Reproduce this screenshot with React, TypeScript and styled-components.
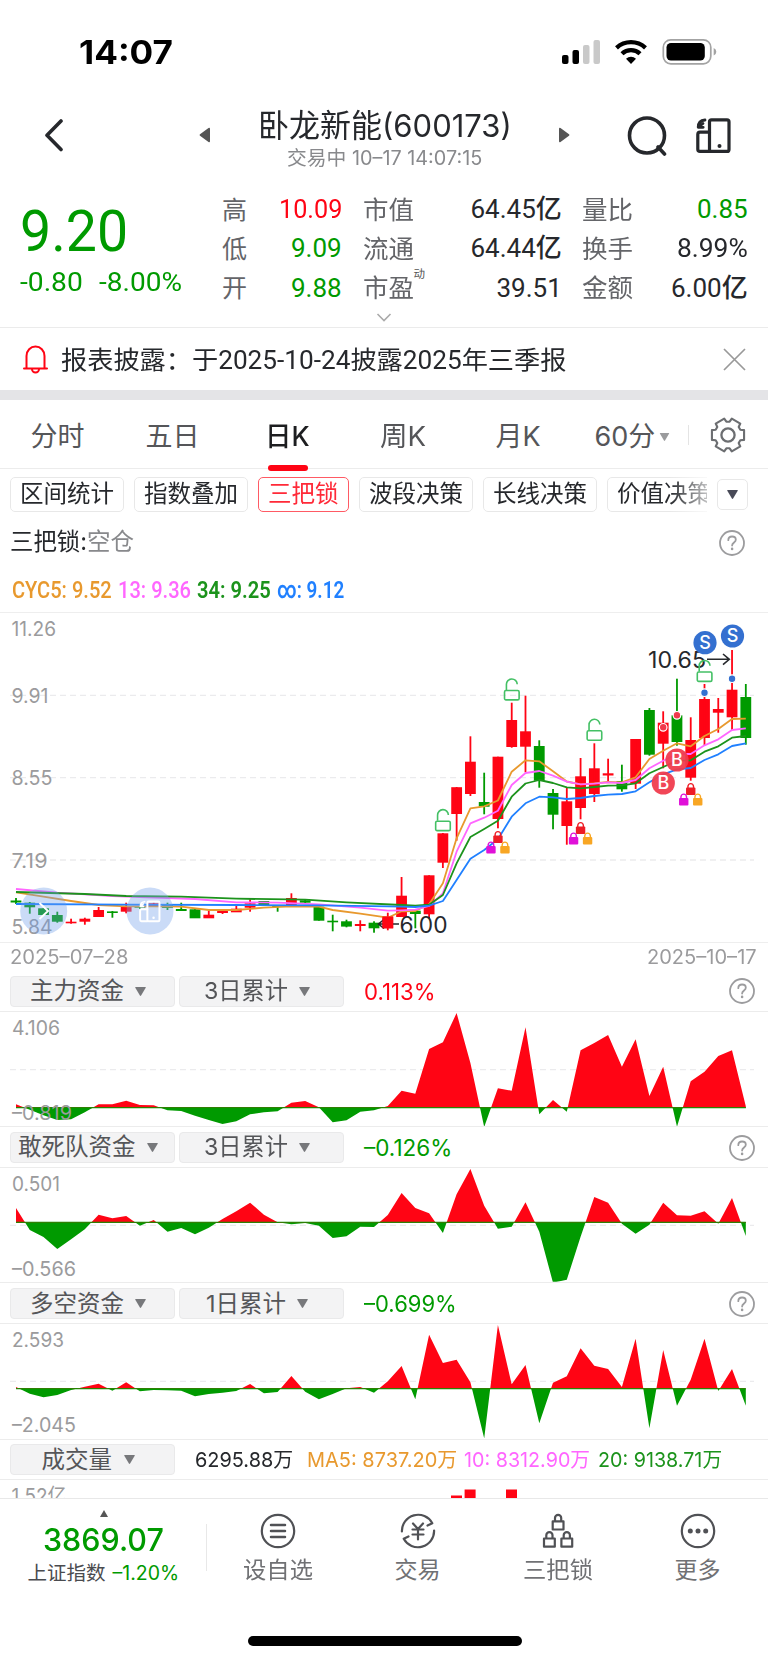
import React, { useLayoutEffect, useRef, useState } from 'react';
import styled, { createGlobalStyle } from 'styled-components';

const RED = '#ff0414';
const GREEN = '#009a00';
const ORANGE = '#e8992e';
const PINK = '#ff66ff';
const DGREEN = '#1c931c';
const BLUE = '#2080ff';
const INK = '#26282c';

const sans = `Inter, "Noto Sans CJK SC", sans-serif`;
const din = `Roboto, "Noto Sans CJK SC", sans-serif`;

const Global = createGlobalStyle`
  *{box-sizing:border-box}
  body{margin:0;background:#fff;font-family:${sans};color:${INK};}
`;

/* ---------- text fitted to a set width ---------- */
const FitBox = styled.span<{ $w: number }>`
  display: inline-block;
  flex: none;
  width: ${(p) => p.$w}px;
  white-space: nowrap;
  text-align: left;
`;
const FitInner = styled.span`
  display: inline-block;
  transform-origin: 0 50%;
  white-space: pre;
`;
function Fit({ w, children }: { w: number; children: React.ReactNode }) {
  const ref = useRef<HTMLSpanElement>(null);
  const [scale, setScale] = useState(1);
  useLayoutEffect(() => {
    if (ref.current) setScale(w / ref.current.offsetWidth);
  }, [w]);
  return (
    <FitBox $w={w}>
      <FitInner ref={ref} style={{ transform: `scaleX(${scale})` }}>{children}</FitInner>
    </FitBox>
  );
}

const Text = styled.span<{ $s: number; $c?: string; $b?: number; $din?: boolean }>`
  display: flex;
  flex: none;
  font-size: ${(p) => p.$s}px;
  line-height: 1.2;
  color: ${(p) => p.$c || INK};
  font-weight: ${(p) => p.$b || 400};
  font-family: ${(p) => (p.$din ? din : sans)};
`;

const Page = styled.div`
  width: 768px;
  height: 1663px;
  overflow: hidden;
  background: #fff;
  display: flex;
  flex-direction: column;
`;

/* ---------- status bar and header ---------- */
const StatusBar = styled.div`
  height: 103px;
  flex: none;
  display: flex;
  align-items: center;
  justify-content: space-between;
  padding: 1px 50px 0 79px;
`;
const Header = styled.div`
  height: 87px;
  flex: none;
  display: grid;
  grid-template-columns: 199px 371px 198px;
`;
const BackCell = styled.div`
  padding: 15px 0 0 42px;
`;
const TitleCell = styled.div`
  display: flex;
  justify-content: space-between;
  > svg { margin-top: 24px; }
`;
const TitleText = styled.div`
  display: flex;
  flex-direction: column;
  align-items: center;
  padding-top: 4px;
  gap: 2.5px;
`;
const ToolCell = styled.div`
  display: flex;
  gap: 29px;
  padding: 12px 0 0 54.5px;
`;

/* ---------- quote ---------- */
const Quote = styled.div`
  height: 138px;
  flex: none;
  display: grid;
  grid-template-columns: 222px 526px;
  grid-template-rows: 118px 19px;
  border-bottom: 1px solid #ebebeb;
`;
const PriceBlock = styled.div`
  padding: 7px 0 0 20px;
`;
const ChangeRow = styled.div`
  display: flex;
  gap: 16px;
`;
const Stats = styled.div`
  display: grid;
  grid-template-columns: 120px 199px 166px;
  grid-template-rows: repeat(3, 39.3px);
  column-gap: 20.5px;
`;
const Stat = styled.div`
  display: flex;
  justify-content: space-between;
  align-items: center;
`;
const StatLabel = styled.div`
  position: relative;
`;
const Sup = styled.span`
  position: absolute;
  left: 100%;
  top: -8px;
  font-size: 11.5px;
  color: #555;
`;
const Expand = styled.div`
  grid-column: 1 / 3;
  display: flex;
  padding: 5px 0 0 376px;
`;
const Notice = styled.div`
  height: 62px;
  flex: none;
  display: flex;
  align-items: center;
  padding: 0 22px 0 23px;
  > svg:last-child { margin-left: auto; }
  > span { margin: 3px 0 0 13px; }
`;
const Band = styled.div`
  height: 10px;
  flex: none;
  background: #e4e4e7;
`;

/* ---------- tabs ---------- */
const Tabs = styled.div`
  height: 69px;
  flex: none;
  display: grid;
  grid-template-columns: 115px 115px 115px 115px 116px 112px 80px;
  border-bottom: 1px solid #ececec;
`;
const Tab = styled.div`
  position: relative;
  display: flex;
  align-items: center;
  justify-content: center;
  gap: 3px;
  padding-top: 6px;
`;
const Underline = styled.span`
  position: absolute;
  bottom: -2.5px;
  width: 40px;
  height: 6px;
  border-radius: 3px;
  background: ${RED};
`;
const GearCell = styled.div`
  display: flex;
  align-items: center;
  gap: 21px;
  padding-top: 2px;
  &::before { content: ''; width: 1px; height: 20px; background: #e4e4e4; }
`;
const Chips = styled.div`
  height: 51px;
  flex: none;
  display: flex;
  align-items: center;
  padding: 0 20px 0 10px;
`;
const ChipScroll = styled.div`
  width: 697px;
  display: flex;
  gap: 10px;
  overflow: hidden;
  -webkit-mask-image: linear-gradient(90deg, #000 660px, transparent 712px);
  mask-image: linear-gradient(90deg, #000 660px, transparent 712px);
`;
const Chip = styled.div<{ $on?: boolean }>`
  flex: none;
  height: 35px;
  padding: 0 9px;
  display: flex;
  align-items: center;
  border: 1px solid ${(p) => (p.$on ? '#ff5a64' : '#e8e8e8')};
  border-radius: 5px;
`;
const MoreBox = styled.div`
  width: 31px;
  height: 31px;
  margin-left: 10px;
  border: 1px solid #e8e8e8;
  border-radius: 5px;
  display: flex;
  align-items: center;
  justify-content: center;
`;
const LockLine = styled.div`
  height: 43px;
  flex: none;
  display: flex;
  align-items: center;
  padding: 2px 23px 0 10px;
  > svg { margin-left: auto; }
`;
const CycLine = styled.div`
  height: 50px;
  flex: none;
  display: flex;
  align-items: center;
  gap: 6px;
  padding: 4px 0 0 12px;
  border-bottom: 1px solid #eeeeee;
`;
const Dates = styled.div`
  height: 29px;
  flex: none;
  display: flex;
  justify-content: space-between;
  align-items: center;
  padding: 1px 11px 0 10px;
  border-top: 1px solid #eeeeee;
`;

/* ---------- fund panels ---------- */
const FundHead = styled.div`
  height: 40.8px;
  flex: none;
  display: flex;
  align-items: center;
  gap: 4px;
  padding: 1px 13px 0 10px;
  border-bottom: 1px solid #ececec;
  > svg { margin-left: auto; }
`;
const FundBody = styled.div`
  height: 115.4px;
  flex: none;
  border-bottom: 1px solid #ececec;
`;
const Picker = styled.div`
  width: 165px;
  height: 31px;
  flex: none;
  background: #f3f3f4;
  border: 1px solid #e9e9ea;
  border-radius: 4px;
  display: flex;
  align-items: center;
  justify-content: center;
  gap: 11px;
  padding-right: 9px;
`;
const FundValue = styled.div`
  margin-left: 16px;
`;
const MaRow = styled.div`
  display: flex;
  margin-left: 15.5px;
  > :nth-child(2) { margin-left: 14.5px; }
  > :nth-child(3) { margin-left: 7px; }
  > :nth-child(4) { margin-left: 8px; }
`;
const VolBody = styled.div`
  height: 18px;
  flex: none;
  overflow: hidden;
`;

/* ---------- bottom bar ---------- */
const Bottom = styled.div`
  height: 120px;
  flex: none;
  display: grid;
  grid-template-columns: 207px 141px 139px 141px 139px;
  border-top: 1px solid #e8e8e8;
`;
const IndexCell = styled.div`
  position: relative;
  display: flex;
  flex-direction: column;
  align-items: center;
  padding-top: 11px;
  gap: 3.5px;
  &::after { content: ''; position: absolute; right: 0; top: 25px; width: 1px; height: 47px; background: #e8e8e8; }
`;
const IndexRow = styled.div`
  display: flex;
  gap: 7px;
`;
const Action = styled.div`
  display: flex;
  flex-direction: column;
  align-items: center;
  padding-top: 14px;
  gap: 8px;
`;
const Home = styled.div`
  width: 274px;
  height: 10px;
  margin: 17.5px 0 0 247.5px;
  border-radius: 5px;
  background: #000;
`;

/* ---------- small drawings ---------- */
const Caret = ({ w = 11, h = 9, c = '#77787b' }: { w?: number; h?: number; c?: string }) => (
  <svg width={w} height={h} viewBox="0 0 11 9"><path d="M0.7 0h9.6q.7 0 .4.7L6.1 8.5q-.6.8-1.2 0L.3.7Q0 0 .7 0z" fill={c} /></svg>
);
const Help = () => (
  <svg width="26" height="26" viewBox="0 0 26 26" fill="none" stroke="#9c9c9e" strokeWidth="1.8">
    <circle cx="13" cy="13" r="12" />
    <path d="M9.3 10.2c0-2.2 1.6-3.7 3.8-3.7s3.7 1.4 3.7 3.3c0 2.6-3.7 2.9-3.7 5.8" strokeLinecap="round" />
    <circle cx="13.1" cy="18.9" r="1.3" fill="#9c9c9e" stroke="none" />
  </svg>
);
const gearPath = () => {
  const pts: string[] = [];
  for (let k = 0; k < 6; k++) {
    for (const [a, r] of [[-23, 13.4], [-17, 16.8], [17, 16.8], [23, 13.4]]) {
      const t = ((k * 60 + a) * Math.PI) / 180;
      pts.push(`${(18 + r * Math.cos(t)).toFixed(2)} ${(18 + r * Math.sin(t)).toFixed(2)}`);
    }
  }
  return `M${pts.join('L')}Z`;
};
const Gear = () => (
  <svg width="36" height="36" fill="none" stroke="#6c6e71" strokeWidth="2.1" strokeLinejoin="round">
    <path d={gearPath()} />
    <circle cx="18" cy="18" r="6.6" strokeWidth="2.3" />
  </svg>
);

/* ---------- candle chart ---------- */
const STEP = 13.77;
const cx = (i: number) => 16 + i * STEP;
// [up, body top, body bottom, high, low]
const candles: [number, number, number, number, number][] = [
  [0, 287.5, 289.5, 285, 291], [0, 289.7, 294.3, 289, 300.7], [0, 295.3, 302, 295, 302], [0, 302, 308.7, 298.7, 309.7],
  [1, 308.7, 310.3, 305.7, 310.7], [1, 305.7, 308.7, 304.7, 311.7], [1, 297, 304, 294, 304], [0, 298.4, 300, 298, 304.7],
  [1, 293.7, 298.7, 289.7, 300.3], [0, 293, 294.7, 292, 296], [1, 290.3, 294, 289.7, 294], [0, 292, 295, 289.7, 297],
  [0, 296, 298, 289.7, 298], [0, 296.3, 305.3, 296, 305], [1, 301.7, 305.3, 297.7, 305], [1, 298, 300, 297.7, 301],
  [1, 295.7, 299.3, 293, 299], [1, 290.3, 294.7, 286.3, 298.7], [0, 288, 292.3, 288, 292], [0, 292.3, 294, 292, 298.7],
  [1, 285, 292, 280.3, 294], [0, 287.3, 289.7, 287, 290], [0, 293.7, 307.7, 293.7, 307.7], [0, 307.7, 309.3, 301.7, 318.3],
  [0, 308.3, 313.6, 306.7, 314.3], [1, 311, 313, 307.3, 318.3], [0, 309.7, 315.3, 308.3, 319.7], [1, 303.5, 315.3, 299.7, 317.3],
  [1, 282.7, 304, 264, 304], [0, 297.7, 301, 297, 315.3], [1, 262.3, 301.3, 262.3, 305.7], [1, 220.3, 249.7, 220, 255],
  [1, 174.2, 201, 174, 227.7], [1, 148.7, 181, 123.3, 183], [0, 189, 193.7, 159.7, 201.3], [1, 143.7, 206, 143.7, 215.3],
  [1, 107, 134, 89.7, 134.7], [1, 118.3, 133.7, 82.7, 159.3], [0, 133, 167.7, 127.3, 174.7], [0, 180, 201.7, 176, 216.3],
  [1, 188.3, 213, 174.7, 231.7], [1, 163.3, 195, 145, 206.3], [1, 155.3, 181, 130.3, 189], [1, 160.3, 162.5, 145.7, 168.7],
  [0, 168, 176.3, 151.7, 178.7], [1, 126, 170.7, 126, 176], [0, 97, 141.7, 95, 142.7], [1, 109.7, 130.7, 98.3, 155.3],
  [0, 102.3, 129, 65.7, 132.7], [1, 127, 164.7, 104.3, 167.7], [1, 86, 125, 71, 132], [1, 96, 99.7, 85, 119.7],
  [1, 76.7, 104.3, 37, 117], [0, 84, 125, 71, 131.7],
];
const maOrange: [number, number][] = [[0, 279.3], [2, 283.7], [4, 288], [6, 292], [8, 293.3], [10, 293.3], [12, 293.7], [14, 297], [16, 297], [18, 294.7], [20, 293.3], [22, 293.7], [23, 297], [25, 300.7], [27, 304.7], [28, 298.3], [29, 298], [30, 291.3], [31, 270.3], [32, 225.3], [33, 195.3], [34, 193.3], [35, 187.5], [36, 158.7], [37, 147.3], [38, 148.3], [39, 158.3], [40, 168.5], [41, 171.3], [42, 170.3], [43, 169], [44, 169.3], [45, 164.3], [46, 146], [47, 137.7], [48, 130.3], [49, 133.3], [50, 123], [51, 116], [52, 106], [53, 105.7]];
const maPink: [number, number][] = [[0, 276], [3, 279.7], [7, 283], [10, 284.7], [13, 286], [16, 289.3], [19, 289.7], [22, 291.3], [25, 294.7], [27, 297.7], [28, 297.3], [29, 296.7], [30, 293], [31, 280.3], [32, 238.7], [33, 210.3], [34, 204.7], [35, 197.7], [36, 172], [37, 160], [38, 158], [39, 162.7], [40, 168.7], [41, 171.3], [42, 170.7], [43, 169.3], [44, 170], [45, 167], [46, 155.3], [47, 147.7], [48, 141], [49, 141], [50, 132.3], [51, 126.3], [52, 117], [53, 115.3]];
const maGreen: [number, number][] = [[0, 279], [5, 281], [8, 283], [12, 283.7], [16, 285.7], [21, 286.7], [24, 289.3], [28, 292], [29, 292.7], [30, 291.7], [31, 282], [32, 250.3], [33, 224], [34, 216], [35, 207.7], [36, 183.7], [37, 170.5], [38, 167], [39, 170], [40, 174.3], [41, 175.3], [42, 174], [43, 172.7], [44, 172.3], [45, 170.3], [46, 160.3], [47, 154], [48, 147.7], [49, 147.3], [50, 138.7], [51, 133.3], [52, 124.7], [53, 123]];
const maBlue: [number, number][] = [[0, 291], [8, 291.7], [16, 292], [22, 292.3], [27, 293.3], [28, 293.7], [29, 294], [30, 292.7], [31, 288], [32, 267], [33, 245.7], [34, 237], [35, 226.3], [36, 203.7], [37, 190.3], [38, 183.7], [39, 184.3], [40, 186], [41, 185], [42, 183], [43, 181.7], [44, 181], [45, 178.3], [46, 169.3], [47, 161.3], [48, 156.3], [49, 155], [50, 147], [51, 141.3], [52, 133], [53, 130.3]];
const line = (p: [number, number][]) => p.map(([i, y]) => `${cx(i).toFixed(1)},${y}`).join(' ');

const ChartSvg = styled.svg`
  display: block;
  flex: none;
  font-family: ${sans};
`;

const OpenLock = ({ i, y }: { i: number; y: number }) => (
  <g transform={`translate(${cx(i) - 7.2} ${y})`} fill="none" stroke="#44c065" strokeWidth="1.6">
    <rect x="0" y="0.5" width="14.6" height="9.4" rx="1.4" />
    <path d="M1.9 0V-5.5a5.4 5.4 0 0 1 10.8-0.3" />
  </g>
);
const MiniLock = ({ x, y, c }: { x: number; y: number; c: string }) => (
  <g transform={`translate(${x} ${y})`}>
    <path d="M-2.8 5V3.4a2.8 2.8 0 0 1 5.6 0V5" fill="none" stroke={c} strokeWidth="1.4" />
    <rect x="-4.7" y="4.6" width="9.4" height="7.4" rx="1" fill={c} />
  </g>
);
const TripleLock = ({ i, y }: { i: number; y: number }) => (
  <g>
    <MiniLock x={cx(i)} y={y} c="#ee1c25" />
    <MiniLock x={cx(i) - 7} y={y + 10.5} c="#e010d8" />
    <MiniLock x={cx(i) + 7} y={y + 10.5} c="#f8a623" />
  </g>
);
const Badge = ({ x, y, t, c }: { x: number; y: number; t: string; c: string }) => (
  <g>
    <circle cx={x} cy={y} r="11.6" fill={c} />
    <text x={x} y={y + 6.4} fontSize="18" fontWeight="500" textAnchor="middle" fill="#fff">{t}</text>
  </g>
);
const Flip = ({ x, y, k, c }: { x: number; y: number; k: number; c: string }) => (
  <g transform={`translate(${x} ${y}) scale(${k})`} fill="none" stroke={c} strokeWidth="3.2" strokeLinejoin="round" strokeLinecap="round">
    <rect x="13.5" y="1.8" width="19.5" height="31.6" rx="2" />
    <path d="M13.5 14.2H4q-2.2 0-2.2 2.2v14.8q0 2.2 2.2 2.2h9.5" />
    <path d="M9 2C4.5 2.4 2.2 4.8 2.2 9.3M2.2 9.3h5M7 5.5L2.5 9" strokeWidth="2.8" />
    <circle cx="23.5" cy="28" r="2" fill={c} stroke="none" />
  </g>
);

const KChart = () => (
  <ChartSvg width="768" height="329" viewBox="0 0 768 329">
    {[82.3, 164.7, 247].map((y) => <path key={y} d={`M10 ${y}H754`} stroke="#ebebed" strokeWidth="1.3" strokeDasharray="6 4" />)}
    {candles.map(([up, t, b, h, l], i) => (
      <g key={i} fill={up ? RED : GREEN}>
        <rect x={cx(i) - 5.4} y={t} width="10.8" height={b - t} />
        <rect x={cx(i) - 0.9} y={h} width="1.8" height={l - h} />
      </g>
    ))}
    <g fill="none" strokeWidth="1.8" strokeLinejoin="round">
      <polyline points={line(maOrange)} stroke={ORANGE} />
      <polyline points={line(maPink)} stroke={PINK} />
      <polyline points={line(maGreen)} stroke={DGREEN} />
      <polyline points={line(maBlue)} stroke={BLUE} />
    </g>
    <g fontSize="20" fill="#9b9b9d">
      <text x="11.5" y="22.7" textLength="44.5" lengthAdjust="spacingAndGlyphs">11.26</text>
      <text x="11.5" y="90" textLength="37" lengthAdjust="spacingAndGlyphs">9.91</text>
      <text x="11.5" y="172.3" textLength="41" lengthAdjust="spacingAndGlyphs">8.55</text>
      <text x="11.5" y="254.7" textLength="36" lengthAdjust="spacingAndGlyphs">7.19</text>
      <text x="11.5" y="321.3" textLength="41" lengthAdjust="spacingAndGlyphs">5.84</text>
    </g>
    <g fill="none" stroke={INK} strokeWidth="1.6">
      <path d="M378.5 311H399M384 306.5L378.5 311l5.5 4.500" />
      <path d="M707 46.3H729M723 41l6.3 5.3L723 51.6" />
    </g>
    <rect x={cx(27) - 5.4} y="303.5" width="10.8" height="11.8" fill={RED} />
    <g fontSize="22.5" fill={INK}>
      <text x="399.5" y="319.6" textLength="48" lengthAdjust="spacingAndGlyphs">6.00</text>
      <text x="648" y="54.5" textLength="58" lengthAdjust="spacingAndGlyphs">10.65</text>
    </g>
    <OpenLock i={31} y={207.7} />
    <OpenLock i={36} y={77} />
    <OpenLock i={42} y={117.3} />
    <OpenLock i={50} y={58.5} />
    <TripleLock i={35} y={218} />
    <TripleLock i={41} y={209} />
    <TripleLock i={49} y={170} />
    <g stroke="#fff" strokeWidth="1.2">
      <circle cx={cx(50)} cy="79.7" r="3.8" fill="#3470d0" />
      <circle cx={cx(52)} cy="65.7" r="3.8" fill="#3470d0" />
      <circle cx={cx(47)} cy="114.3" r="3.8" fill="#f03a4c" />
      <circle cx={cx(48)} cy="102.3" r="3.8" fill="#f03a4c" />
    </g>
    <Badge x={705} y={29.7} t="S" c="#3470d0" />
    <Badge x={732.5} y={23} t="S" c="#3470d0" />
    <Badge x={663.3} y={170} t="B" c="#f03a4cf0" />
    <Badge x={677} y={147} t="B" c="#f03a4cf0" />
    <circle cx="43.7" cy="298" r="23.5" fill="#6c9ae8" fillOpacity="0.36" />
    <circle cx="150" cy="298" r="23.5" fill="#7ba6ea" fillOpacity="0.4" />
    <path d="M39.5 290L48 298L39.5 306" fill="none" stroke="#fff" strokeWidth="1.9" />
    <Flip x={139} y={287.5} k={0.62} c="#fff" />
  </ChartSvg>
);

/* ---------- fund flow charts ---------- */
interface Fund { name: string; span: string; value: string; vw: number; up: boolean; hi: string; hiW: number; lo: string; loW: number; zero: number; grid: number; tw: number; sw: number; d: number[] }
// each series holds depths below the top edge, in thirds of a pixel
const funds: Fund[] = [
  {
    name: '主力资金', tw: 94, span: '3日累计', sw: 84, value: '0.113%', vw: 71, up: true, hi: '4.106', hiW: 48, lo: '–0.819', loW: 60, zero: 287, grid: 173,
    d: [277, 293, 310, 324, 322, 301, 277, 277, 266, 279, 280, 295, 297, 311, 324, 336, 328, 307, 301, 298, 272, 267, 286, 331, 325, 299, 295, 282, 236, 245, 111, 91, 3, 153, 345, 229, 236, 46, 307, 264, 299, 115, 93, 69, 164, 82, 252, 164, 344, 208, 179, 132, 115, 283],
  },
  {
    name: '敢死队资金', tw: 118, span: '3日累计', sw: 84, value: '–0.126%', vw: 88, up: false, hi: '0.501', hiW: 48, lo: '–0.566', loW: 64, zero: 163, grid: 172,
    d: [120, 186, 207, 243, 214, 184, 140, 151, 144, 173, 156, 191, 180, 199, 179, 153, 130, 104, 140, 163, 169, 165, 173, 210, 205, 176, 177, 141, 75, 120, 136, 195, 79, 3, 113, 182, 176, 103, 191, 344, 335, 206, 87, 104, 167, 197, 170, 104, 142, 143, 130, 167, 90, 204],
  },
  {
    name: '多空资金', tw: 94, span: '1日累计', sw: 80, value: '–0.699%', vw: 93, up: false, hi: '2.593', hiW: 52, lo: '–2.045', loW: 64, zero: 194, grid: 172,
    d: [189, 209, 220, 213, 198, 188, 179, 200, 175, 202, 198, 199, 200, 217, 210, 206, 201, 180, 208, 204, 156, 203, 226, 210, 193, 189, 206, 172, 126, 226, 32, 117, 107, 175, 343, 3, 181, 123, 298, 176, 157, 73, 125, 135, 189, 44, 313, 78, 245, 167, 44, 201, 135, 245],
  },
];

const FundChart = ({ f, id }: { f: Fund; id: string }) => {
  const z = f.zero / 3;
  const pts = f.d.map((v, i) => `${cx(i).toFixed(1)} ${(v / 3).toFixed(1)}`).join('L');
  const d = `M16 ${z}L${pts}L${cx(53)} ${z}Z`;
  return (
    <ChartSvg width="768" height="114" viewBox="0 0 768 114" fontSize="20">
      <clipPath id={`${id}u`}><rect width="768" height={z + 0.6} /></clipPath>
      <clipPath id={`${id}d`}><rect y={z - 0.6} width="768" height="60" /></clipPath>
      <path d={`M10 ${f.grid / 3}H754`} stroke="#ebebed" strokeWidth="1.3" strokeDasharray="6 4" />
      <path d={`M16 ${z}H${cx(53)}`} stroke={GREEN} strokeWidth="1.2" />
      <path d={d} fill={RED} clipPath={`url(#${id}u)`} />
      <path d={d} fill={GREEN} clipPath={`url(#${id}d)`} />
      <g fill="#9b9b9d">
        <text x="12" y="22.8" textLength={f.hiW} lengthAdjust="spacingAndGlyphs">{f.hi}</text>
        <text x="12" y="108" textLength={f.loW} lengthAdjust="spacingAndGlyphs">{f.lo}</text>
      </g>
    </ChartSvg>
  );
};

const stats: { l: string; lw: number; v: string; w: number; c?: string; sup?: string }[] = [
  { l: '高', lw: 25, v: '10.09', w: 63, c: RED }, { l: '市值', lw: 51, v: '64.45亿', w: 91 }, { l: '量比', lw: 51, v: '0.85', w: 51, c: GREEN },
  { l: '低', lw: 25, v: '9.09', w: 51, c: GREEN }, { l: '流通', lw: 51, v: '64.44亿', w: 91 }, { l: '换手', lw: 51, v: '8.99%', w: 71 },
  { l: '开', lw: 25, v: '9.88', w: 51, c: GREEN }, { l: '市盈', lw: 51, v: '39.51', w: 65, sup: '动' }, { l: '金额', lw: 51, v: '6.00亿', w: 77 },
];
const chips: [string, number][] = [['区间统计', 94], ['指数叠加', 94], ['三把锁', 71], ['波段决策', 94], ['长线决策', 94], ['价值决策', 94]];

export default function App() {
  return (
    <>
      <Global />
      <Page>
        <StatusBar>
          <Text $s={32.5} $b={700} $c="#000"><Fit w={94}>14:07</Fit></Text>
          <svg width="156" height="28" viewBox="0 0 156 28">
            <rect x="0" y="17" width="6.5" height="9" rx="2" /><rect x="10.5" y="12" width="6.5" height="14" rx="2" />
            <rect x="21" y="7" width="6.5" height="19" rx="2" fill="#c9c9c9" /><rect x="31.5" y="2" width="6.5" height="24" rx="2" fill="#c9c9c9" />
            <g fill="none" stroke="#000" strokeWidth="4.3">
              <path d="M54.5 9.8a21.5 21.5 0 0 1 29 0" /><path d="M60 15.8a13 13 0 0 1 18 0" />
            </g>
            <path d="M64 20.7a7.6 7.6 0 0 1 10 0L69 26z" />
            <rect x="101.3" y="1.8" width="47.5" height="24" rx="7.5" fill="none" stroke="#a3a3a3" strokeWidth="1.7" />
            <rect x="104.5" y="5" width="38.3" height="17.6" rx="4.5" />
            <path d="M151.7 10q2.6 1 2.6 3.8t-2.6 3.8z" fill="#a3a3a3" />
          </svg>
        </StatusBar>
        <Header>
          <BackCell>
            <svg width="24" height="34" fill="none" stroke={INK} strokeWidth="3.6" strokeLinecap="round" strokeLinejoin="round"><path d="M19 3L5 17.3L19 31.5" /></svg>
          </BackCell>
          <TitleCell>
            <svg width="12" height="16"><path d="M1 7.2L9.500 1q1.5-.8 1.500 1v12q0 1.8-1.500 1L1 8.800q-1-.8 0-1.600z" fill="#555" /></svg>
            <TitleText>
              <Text $s={31.5}><Fit w={254}>卧龙新能(600173)</Fit></Text>
              <Text $s={19.5} $c="#88898c"><Fit w={195}>交易中 10–17 14:07:15</Fit></Text>
            </TitleText>
            <svg width="12" height="16"><path d="M11 7.2L2.500 1Q1 .2 1 2v12q0 1.8 1.500 1L11 8.800q1-.8 0-1.600z" fill="#555" /></svg>
          </TitleCell>
          <ToolCell>
            <svg width="42" height="42" fill="none" stroke={INK} strokeWidth="3.6"><circle cx="22" cy="20.5" r="17.5" /><path d="M33 32l6.5 7" strokeLinecap="round" /></svg>
            <svg width="36" height="40"><Flip x={0} y={3} k={1} c={INK} /></svg>
          </ToolCell>
        </Header>
        <Quote>
          <PriceBlock>
            <Text $s={58} $c={GREEN} $b={450} $din><Fit w={108}>9.20</Fit></Text>
            <ChangeRow>
              <Text $s={26} $c={GREEN} $din><Fit w={63}>-0.80</Fit></Text>
              <Text $s={26} $c={GREEN} $din><Fit w={83}>-8.00%</Fit></Text>
            </ChangeRow>
          </PriceBlock>
          <Stats>
            {stats.map((s) => (
              <Stat key={s.l}>
                <StatLabel>
                  <Text $s={25} $c="#646569"><Fit w={s.lw}>{s.l}</Fit></Text>
                  {s.sup && <Sup>{s.sup}</Sup>}
                </StatLabel>
                <Text $s={26} $b={450} $c={s.c} $din><Fit w={s.w}>{s.v}</Fit></Text>
              </Stat>
            ))}
          </Stats>
          <Expand><svg width="16" height="9" fill="none" stroke="#aaa" strokeWidth="1.6"><path d="M1.5 1L8 7.5L14.5 1" /></svg></Expand>
        </Quote>
        <Notice>
          <svg width="25" height="29" viewBox="0 0 25 29" fill="none" stroke={RED} strokeWidth="2">
            <path d="M1 23.5H24M3.5 23.5V11a9 9.5 0 0 1 18 0v12.5" strokeLinecap="round" />
            <path d="M9 24a3.5 3.5 0 0 0 7 0" />
          </svg>
          <Text $s={25} $din><Fit w={505}>报表披露：于2025-10-24披露2025年三季报</Fit></Text>
          <svg width="23" height="23" stroke="#999" strokeWidth="1.7"><path d="M1 1L22 22M22 1L1 22" /></svg>
        </Notice>
        <Band />
        <Tabs>
          <Tab><Text $s={27} $c="#555659"><Fit w={54}>分时</Fit></Text></Tab>
          <Tab><Text $s={27} $c="#555659"><Fit w={54}>五日</Fit></Text></Tab>
          <Tab><Text $s={27} $b={500} $c="#1d1e20"><Fit w={45}>日K</Fit></Text><Underline /></Tab>
          <Tab><Text $s={27} $c="#555659"><Fit w={46}>周K</Fit></Text></Tab>
          <Tab><Text $s={27} $c="#555659"><Fit w={45}>月K</Fit></Text></Tab>
          <Tab><Text $s={27} $c="#555659"><Fit w={61}>60分</Fit></Text><Caret w={11} h={8} c="#9a9b9d" /></Tab>
          <GearCell><Gear /></GearCell>
        </Tabs>
        <Chips>
          <ChipScroll>
            {chips.map(([t, w], i) => (
              <Chip key={t} $on={i === 2}><Text $s={23.5} $c={i === 2 ? '#ff2a38' : INK}><Fit w={w}>{t}</Fit></Text></Chip>
            ))}
          </ChipScroll>
          <MoreBox><Caret w={11} h={9} c="#484a57" /></MoreBox>
        </Chips>
        <LockLine>
          <Text $s={24}><Fit w={77}>三把锁:</Fit></Text>
          <Text $s={24} $c="#88898c"><Fit w={47}>空仓</Fit></Text>
          <Help />
        </LockLine>
        <CycLine>
          <Text $s={24.5} $b={550} $din $c={ORANGE}><Fit w={100}>CYC5: 9.52</Fit></Text>
          <Text $s={24.5} $b={500} $din $c={PINK}><Fit w={73}>13: 9.36</Fit></Text>
          <Text $s={24.5} $b={600} $din $c={DGREEN}><Fit w={74}>34: 9.25</Fit></Text>
          <Text $s={24.5} $b={600} $din $c={BLUE}><Fit w={67}>∞: 9.12</Fit></Text>
        </CycLine>
        <KChart />
        <Dates>
          <Text $s={19.5} $c="#9b9b9d"><Fit w={118}>2025–07–28</Fit></Text>
          <Text $s={19.5} $c="#9b9b9d"><Fit w={110}>2025–10–17</Fit></Text>
        </Dates>
        {funds.map((f, i) => (
          <React.Fragment key={f.name}>
            <FundHead>
              <Picker><Text $s={23.5} $c="#555659"><Fit w={f.tw}>{f.name}</Fit></Text><Caret /></Picker>
              <Picker><Text $s={23.5} $c="#555659"><Fit w={f.sw}>{f.span}</Fit></Text><Caret /></Picker>
              <FundValue><Text $s={22.5} $c={f.up ? RED : GREEN}><Fit w={f.vw}>{f.value}</Fit></Text></FundValue>
              <Help />
            </FundHead>
            <FundBody><FundChart f={f} id={`f${i}`} /></FundBody>
          </React.Fragment>
        ))}
        <FundHead>
          <Picker><Text $s={23.5} $c="#555659"><Fit w={71}>成交量</Fit></Text><Caret /></Picker>
          <MaRow>
            <Text $s={20.5}><Fit w={98}>6295.88万</Fit></Text>
            <Text $s={20.5} $c={ORANGE}><Fit w={150}>MA5: 8737.20万</Fit></Text>
            <Text $s={20.5} $c={PINK}><Fit w={126}>10: 8312.90万</Fit></Text>
            <Text $s={20.5} $c={DGREEN}><Fit w={124}>20: 9138.71万</Fit></Text>
          </MaRow>
        </FundHead>
        <VolBody>
          <ChartSvg width="768" height="18" fontSize="20">
            <text x="11.5" y="22.5" fill="#9b9b9d" textLength="55" lengthAdjust="spacingAndGlyphs">1.52亿</text>
            <g fill={RED}><rect x="451" y="15.5" width="11" height="3" /><rect x="464.6" y="9.5" width="11" height="9" /><rect x="506" y="9.5" width="11" height="9" /></g>
          </ChartSvg>
        </VolBody>
        <Bottom>
          <IndexCell>
            <svg width="8" height="7"><path d="M4 0L8 7H0z" fill="#555" /></svg>
            <Text $s={31.5} $b={500} $c={GREEN}><Fit w={121}>3869.07</Fit></Text>
            <IndexRow>
              <Text $s={19.5} $c="#4a4b4f"><Fit w={78}>上证指数</Fit></Text>
              <Text $s={19.5} $c={GREEN}><Fit w={67}>–1.20%</Fit></Text>
            </IndexRow>
          </IndexCell>
          <Action>
            <svg width="36" height="36" fill="none" stroke="#505155" strokeWidth="2.2" strokeLinecap="round"><circle cx="18" cy="18" r="16.2" /><path d="M11 12H25M11 18H25M11 24H25" strokeWidth="2.5" /></svg>
            <Text $s={23} $c="#707174"><Fit w={70}>设自选</Fit></Text>
          </Action>
          <Action>
            <svg width="36" height="36" fill="none" stroke="#505155" strokeWidth="2.2" strokeLinecap="round" strokeLinejoin="round">
              <path d="M1.9 18.5A16.2 16.2 0 0 1 32.3 10.2L27.5 12.5M34.1 17.5A16.2 16.2 0 0 1 3.7 25.8L8.5 23.5" />
              <path d="M13 10.5L18 16L23 10.5M18 16V26.5M12.5 16.5H23.5M12.5 21.5H23.5" />
            </svg>
            <Text $s={23} $c="#707174"><Fit w={46}>交易</Fit></Text>
          </Action>
          <Action>
            <svg width="36" height="36" fill="none" stroke="#505155" strokeWidth="2.2" strokeLinejoin="round">
              {[[12.7, 1], [4, 18.2], [21.4, 18.2]].map(([x, y]) => (
                <g key={x} transform={`translate(${x} ${y})`}><rect x="0" y="7.3" width="10.8" height="8.2" /><path d="M2.3 7V4a3.1 3.1 0 0 1 6.2 0V7" /></g>
              ))}
            </svg>
            <Text $s={23} $c="#707174"><Fit w={70}>三把锁</Fit></Text>
          </Action>
          <Action>
            <svg width="36" height="36" fill="none" stroke="#505155" strokeWidth="2.2"><circle cx="18" cy="18" r="16.2" /><g fill="#505155" stroke="none"><circle cx="10.3" cy="18" r="2.5" /><circle cx="18" cy="18" r="2.5" /><circle cx="25.7" cy="18" r="2.5" /></g></svg>
            <Text $s={23} $c="#707174"><Fit w={46}>更多</Fit></Text>
          </Action>
        </Bottom>
        <Home />
      </Page>
    </>
  );
}
